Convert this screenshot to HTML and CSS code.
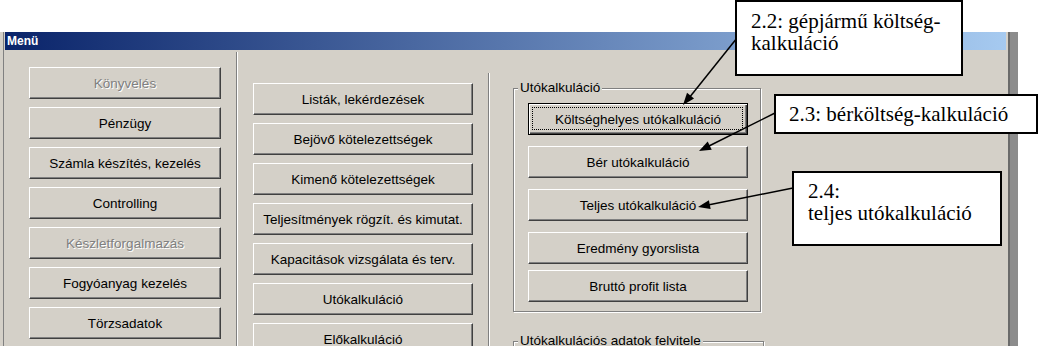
FILE: index.html
```html
<!DOCTYPE html>
<html lang="hu">
<head>
  <meta charset="UTF-8" />
  <title>Menü</title>
  <link rel="stylesheet" href="styles.css">
</head>
<body>
  <div class="window">
    <div class="frame-left"></div>
    <div class="main">
      <div class="titlebar">Menü</div>
      <div class="client">

        <div class="col col-left">
          <button class="btn" disabled>Könyvelés</button>
          <button class="btn">Pénzügy</button>
          <button class="btn">Számla készítés, kezelés</button>
          <button class="btn">Controlling</button>
          <button class="btn" disabled>Készletforgalmazás</button>
          <button class="btn">Fogyóanyag kezelés</button>
          <button class="btn">Törzsadatok</button>
        </div>

        <div class="sep sep-1"></div>

        <div class="col col-mid">
          <button class="btn">Listák, lekérdezések</button>
          <button class="btn">Bejövő kötelezettségek</button>
          <button class="btn">Kimenő kötelezettségek</button>
          <button class="btn">Teljesítmények rögzít. és kimutat.</button>
          <button class="btn">Kapacitások vizsgálata és terv.</button>
          <button class="btn">Utókalkuláció</button>
          <button class="btn">Előkalkuláció</button>
        </div>

        <div class="sep sep-2"></div>

        <div class="col col-right">
          <div class="group">
            <div class="group-title">Utókalkuláció</div>
            <div class="group-body">
              <button class="btn btn-default">Költséghelyes utókalkuláció</button>
              <button class="btn">Bér utókalkuláció</button>
              <button class="btn">Teljes utókalkuláció</button>
              <button class="btn">Eredmény gyorslista</button>
              <button class="btn btn-last">Bruttó profit lista</button>
            </div>
          </div>
          <div class="group group-2">
            <div class="group-title">Utókalkulációs adatok felvitele</div>
            <div class="group-body"></div>
          </div>
        </div>

      </div>
    </div>
    <div class="frame-right"></div>
  </div>

  <svg class="arrows" width="1038" height="346" viewBox="0 0 1038 346">
    <line x1="737" y1="38" x2="689" y2="98" />
    <polygon points="683,105 694.03,98.48 687.03,92.84" />
    <line x1="775" y1="113" x2="708" y2="146.5" />
    <polygon points="699,151 711.74,149.66 707.72,141.61" />
    <line x1="793" y1="188" x2="708" y2="205" />
    <polygon points="698,207 710.65,209.06 708.89,200.24" />
  </svg>

  <div class="callout callout-1">2.2: gépjármű költség-<br>kalkuláció</div>
  <div class="callout callout-2">2.3: bérköltség-kalkuláció</div>
  <div class="callout callout-3">2.4:<br>teljes utókalkuláció</div>
</body>
</html>
```

FILE: styles.css
```css
body {
  margin: 0;
  background: #fff;
  font-family: "Liberation Sans", Arial, sans-serif;
  width: 1038px;
  height: 346px;
  overflow: hidden;
  position: relative;
}

.window {
  margin-top: 32px;
  width: 1018px;
  height: 314px;
  display: flex;
  overflow: hidden;
  background: #d4d0c8;
}

.frame-left {
  width: 5px;
  background: linear-gradient(to right, #d4d0c8 0 3px, #808080 3px 4px, #d4d0c8 4px);
}

.frame-right {
  width: 8px;
  border-left: 2px solid #6a6a6a;
  background: #8c8c8c;
}

.main {
  width: 1003px;
  display: flex;
  flex-direction: column;
  overflow: hidden;
}

.titlebar {
  height: 18px;
  margin-right: 2px;
  padding-left: 2px;
  line-height: 18px;
  font-size: 12px;
  font-weight: bold;
  color: #fff;
  background: linear-gradient(to right, #0a246a, #a6caf0);
}

.client {
  flex: 1;
  display: flex;
  overflow: hidden;
}

.col {
  display: flex;
  flex-direction: column;
  gap: 8px;
}

.col-left {
  width: 207px;
  padding: 17px 0 0 24px;
}

.col-mid {
  width: 235px;
  padding: 33px 0 0 15px;
}

.col-right {
  padding: 38px 0 0 23px;
  gap: 0;
}

.sep {
  width: 0;
  border-left: 1px solid #808080;
  border-right: 1px solid #fff;
}

.sep-1 {
  margin-top: 2px;
}

.sep-2 {
  margin-top: 23px;
}

.btn {
  box-sizing: border-box;
  flex-shrink: 0;
  width: 220px;
  height: 32px;
  padding: 0;
  font-family: "Liberation Sans", Arial, sans-serif;
  font-size: 13.5px;
  color: #000;
  background: #d4d0c8;
  border: 1px solid;
  border-color: #fff #404040 #404040 #fff;
  box-shadow: inset -1px -1px 0 #808080;
  border-radius: 0;
}

.col-left .btn {
  width: 192px;
}

.btn:disabled {
  color: #808080;
  text-shadow: 1px 1px 0 #fff;
}

.btn-default {
  position: relative;
  border-color: #000;
  box-shadow: inset 1px 1px 0 #fff, inset -1px -1px 0 #404040, inset -2px -2px 0 #808080;
}

.btn-default::after {
  content: "";
  position: absolute;
  top: 3px;
  left: 3px;
  right: 4px;
  bottom: 4px;
  border: 1px dotted #000;
}

.group {
  box-sizing: border-box;
  flex-shrink: 0;
  width: 248px;
  border: 1px solid #808080;
  box-shadow: inset 1px 1px 0 #fff, 1px 1px 0 #fff;
}

.group-2 {
  width: 251px;
  margin-top: 29px;
  height: 40px;
}

.group-title {
  display: table;
  margin: -9px 0 0 4px;
  padding: 0 2px;
  height: 16px;
  line-height: 16px;
  font-size: 13.5px;
  background: #d4d0c8;
}

.group-body {
  display: flex;
  flex-direction: column;
  gap: 11px;
  padding: 7px 0 9px 14px;
}

.group-body .btn-last {
  margin-top: -5px;
}

.arrows {
  position: absolute;
  top: 0;
  left: 0;
  pointer-events: none;
}

.arrows line {
  stroke: #000;
  stroke-width: 1.5;
}

.arrows polygon {
  fill: #000;
}

.callout {
  position: absolute;
  box-sizing: border-box;
  background: #fff;
  border: 2px solid #000;
  font-family: "Liberation Serif", "Times New Roman", serif;
  font-size: 21px;
  line-height: 22px;
  color: #000;
  white-space: nowrap;
}

.callout-1 {
  left: 735px;
  top: 0;
  width: 228px;
  height: 76px;
  padding: 8px 0 0 14px;
}

.callout-2 {
  left: 774px;
  top: 94px;
  width: 264px;
  height: 40px;
  padding: 7px 0 0 13px;
}

.callout-3 {
  left: 792px;
  top: 171px;
  width: 210px;
  height: 75px;
  padding: 7px 0 0 14px;
}
```
